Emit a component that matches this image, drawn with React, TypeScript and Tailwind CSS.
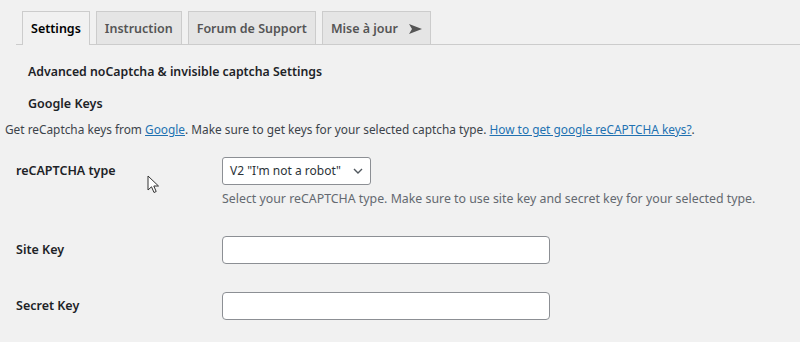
import React from 'react'

const tabs = ['Settings', 'Instruction', 'Forum de Support', 'Mise à jour']

function Cursor() {
  return (
    <svg
      className="absolute left-[147px] top-[175px]"
      width="14"
      height="20"
      viewBox="0 0 14 20"
    >
      <path
        d="M1 1 L1 15 L4.5 11.8 L7 17.5 L9.2 16.5 L6.8 11 L11.5 11 Z"
        fill="#fff"
        stroke="#333"
        strokeWidth="1"
        strokeLinejoin="round"
      />
    </svg>
  )
}

function Row({ label, children, className }: { label: string; children: React.ReactNode; className?: string }) {
  return (
    <div className={`flex ${className ?? ''}`}>
      <div className="w-[222px] pl-[16px] pt-[4px] text-[12.5px] font-semibold leading-[20px] text-[#1d2327]">{label}</div>
      <div className="flex flex-col">{children}</div>
    </div>
  )
}

export default function App() {
  return (
    <div className="relative h-[342px] w-[800px] overflow-hidden bg-[#f1f1f1] text-[12px] text-[#3c434a] font-['Noto_Sans',sans-serif]">
      <nav className="ml-[16px] flex gap-[6px] border-b border-[#ccc] pl-[6px] pt-[11px]">
        {tabs.map((t, i) => (
          <div
            key={t}
            className={
              i === 0
                ? '-mb-px flex h-[34px] items-center border border-b-0 border-[#ccc] bg-[#f1f1f1] px-[8px] pt-[2px] text-[12.5px] font-semibold text-black'
                : 'flex h-[33px] items-center gap-[11px] border border-b-0 border-[#ccc] bg-[#e5e5e5] px-[8px] pt-[2px] text-[12.5px] font-semibold text-[#555]'
            }
          >
            {t}
            {t === 'Mise à jour' && (
              <svg width="13" height="10" viewBox="0 0 13 10">
                <path d="M0 0 L13 5 L0 10 L3 5 Z" fill="#555" />
              </svg>
            )}
          </div>
        ))}
      </nav>

      <h2 className="ml-[28px] mt-[17px] text-[12.3px] font-semibold leading-[20px] text-[#1d2327]">
        Advanced noCaptcha &amp; invisible captcha Settings
      </h2>
      <h3 className="ml-[28px] mt-[12px] text-[12.5px] font-semibold leading-[20px] text-[#1d2327]">Google Keys</h3>
      <p className="ml-[5px] mt-[5px] whitespace-nowrap text-[11.85px] leading-[20px]">
        Get reCaptcha keys from{' '}
        <a className="text-[#2271b1] underline">Google</a>. Make sure to get keys for your selected captcha type.{' '}
        <a className="text-[#2271b1] underline">How to get google reCAPTCHA keys?</a>.
      </p>

      <Row label="reCAPTCHA type" className="mt-[18px]">
        <div className="flex h-[28px] w-[149px] items-center justify-between whitespace-nowrap rounded-[3px] border border-[#8c8f94] bg-white pl-[7px] pr-[7px] text-[#2c3338]">
          <span>V2 "I'm not a robot"</span>
          <svg width="10" height="6" viewBox="0 0 10 6">
            <path d="M1 1 L5 5 L9 1" fill="none" stroke="#50575e" strokeWidth="1.4" />
          </svg>
        </div>
        <p className="mt-[4px] whitespace-nowrap text-[12.35px] leading-[20px] text-[#646970]">
          Select your reCAPTCHA type. Make sure to use site key and secret key for your selected type.
        </p>
      </Row>

      <Row label="Site Key" className="mt-[27px]">
        <div className="h-[28px] w-[328px] rounded-[4px] border border-[#8c8f94] bg-white" />
      </Row>

      <Row label="Secret Key" className="mt-[28px]">
        <div className="h-[28px] w-[328px] rounded-[4px] border border-[#8c8f94] bg-white" />
      </Row>

      <Cursor />
    </div>
  )
}
